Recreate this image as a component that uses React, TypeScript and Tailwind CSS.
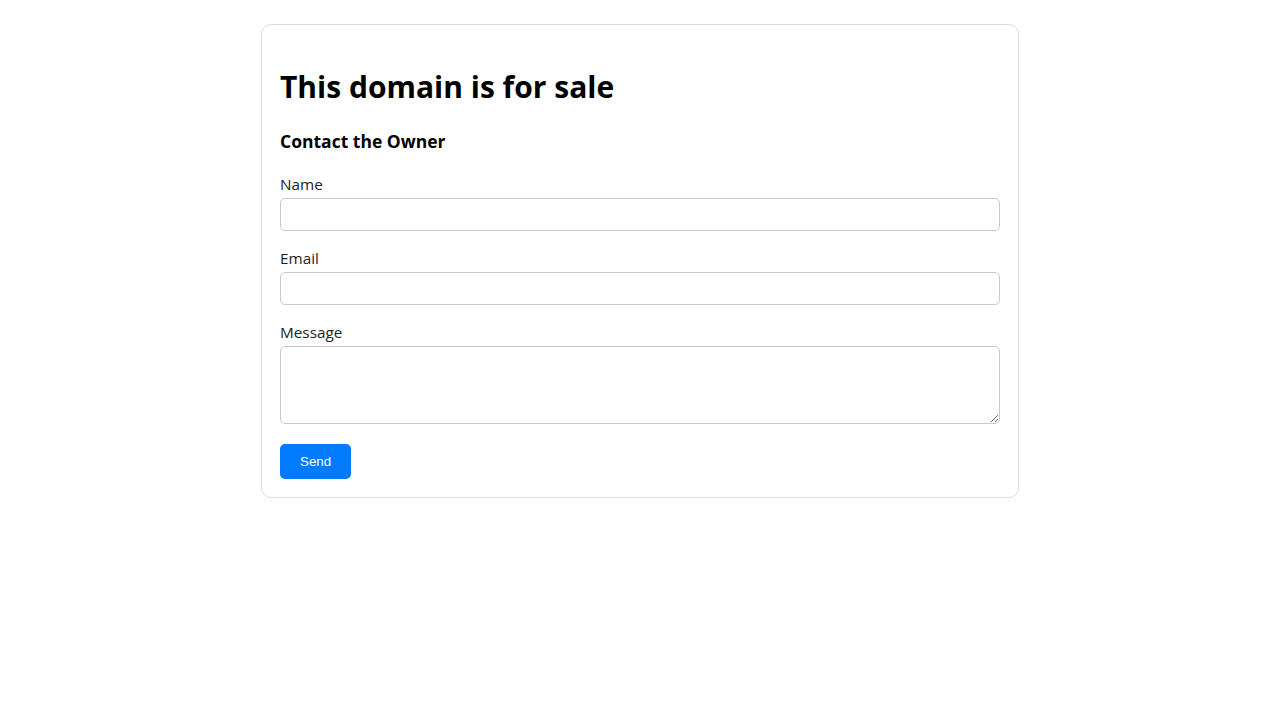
import React, { useState } from 'react';

interface FormData {
  name: string;
  email: string;
  message: string;
}

const App: React.FC = () => {
  const [formData, setFormData] = useState<FormData>({ name: '', email: '', message: '' });

  const handleChange = (e: React.ChangeEvent<HTMLInputElement | HTMLTextAreaElement>) => {
    const { name, value } = e.target;
    setFormData((prev) => ({ ...prev, [name]: value }));
  };

  const handleSubmit = (e: React.FormEvent<HTMLFormElement>) => {
    e.preventDefault();
  };

  return (
    <div className="min-h-screen bg-white pt-6 font-['Open_Sans',sans-serif] text-black">
      <div className="mx-auto w-[758px] rounded-[10px] border border-[#dcdcdc] p-[18px]">
        <h1 className="mt-[22px] mb-[21px] text-[30px] font-bold leading-[43px]">This domain is for sale</h1>
        <h3 className="mt-[18px] mb-[18px] text-[17.5px] font-bold leading-[25px]">Contact the Owner</h3>

        <form onSubmit={handleSubmit}>
          <div className="mb-[15px]">
            <label htmlFor="name" className="mb-px block text-[15.3px] leading-[25px] text-[#222]">Name</label>
            <input
              type="text"
              id="name"
              name="name"
              value={formData.name}
              onChange={handleChange}
              className="block h-[33px] w-full rounded-[5px] border border-[#c8c8c8] px-2 outline-none"
            />
          </div>

          <div className="mb-[15px]">
            <label htmlFor="email" className="mb-px block text-[15.3px] leading-[25px] text-[#222]">Email</label>
            <input
              type="email"
              id="email"
              name="email"
              value={formData.email}
              onChange={handleChange}
              className="block h-[33px] w-full rounded-[5px] border border-[#c8c8c8] px-2 outline-none"
            />
          </div>

          <div className="mb-[15px]">
            <label htmlFor="message" className="mb-px block text-[15.3px] leading-[25px] text-[#222]">Message</label>
            <textarea
              id="message"
              name="message"
              value={formData.message}
              onChange={handleChange}
              className="block h-[78px] w-full rounded-[5px] border border-[#c8c8c8] px-2 outline-none"
            />
          </div>

          <button
            type="submit"
            className="mt-[5px] h-[35px] rounded-[5px] bg-[#007bff] px-5 font-['Liberation_Sans',Arial,sans-serif] text-[13.33px] text-white"
          >
            Send
          </button>
        </form>
      </div>
    </div>
  );
};

export default App;
